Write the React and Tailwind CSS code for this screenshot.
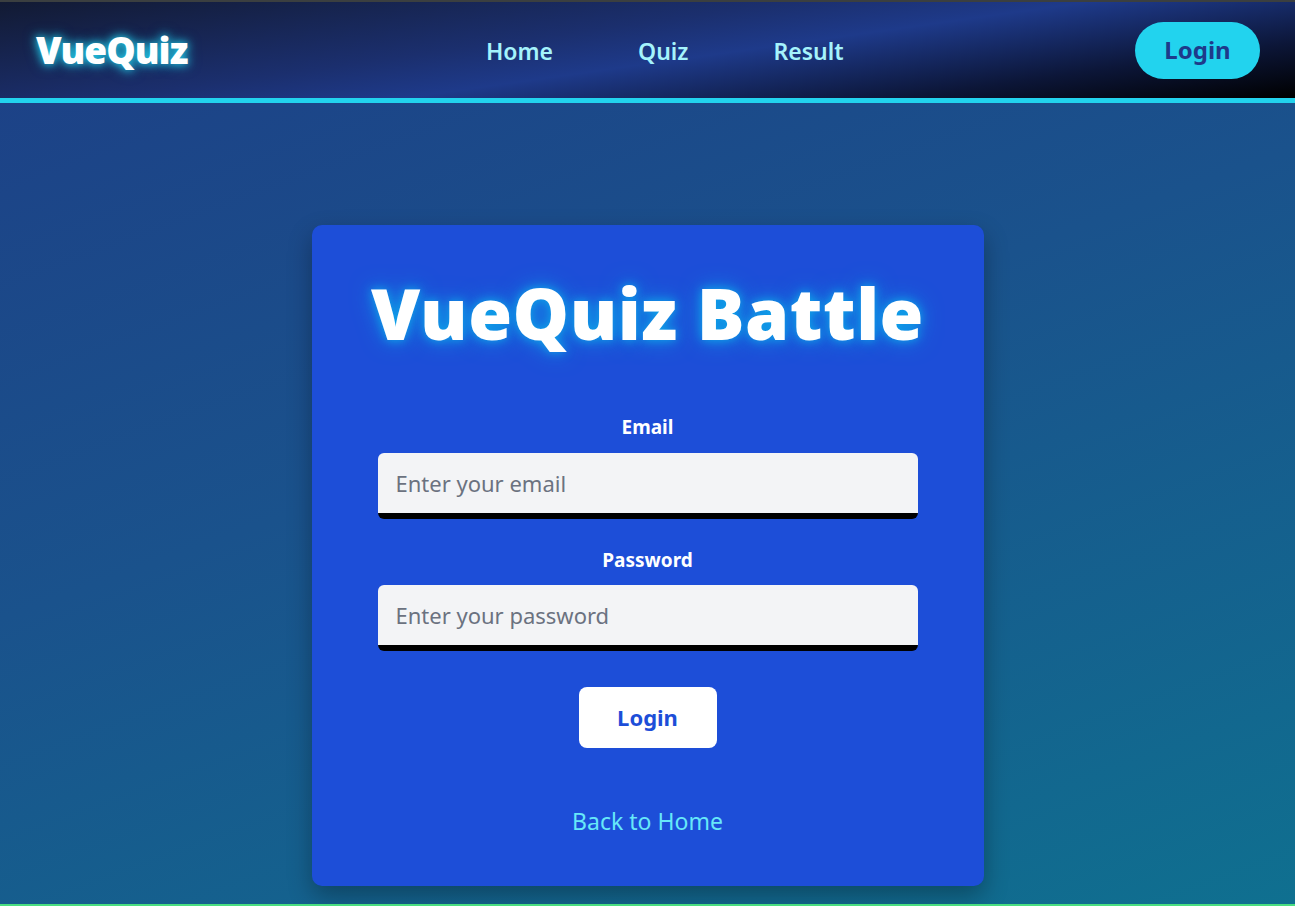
import React from 'react';

function Navbar() {
  return (
    <header className="bg-[#3b3f40] pt-[2px]">
      <nav className="h-[101px] flex items-center justify-between pl-[36px] pr-[35px] border-b-[5px] border-[#22d3ee] bg-[linear-gradient(172deg,#121a33_0%,#1b2f6e_40%,#1e3a8a_55%,#0c1638_80%,#000000_100%)]">
        <a className="text-[37px] font-black text-white tracking-tight [text-shadow:0_0_8px_#22d3ee,0_0_14px_rgba(34,211,238,0.6)]">VueQuiz</a>
        <ul className="flex items-center gap-[85px] ml-[7px] pt-[3px] text-[23px] font-semibold text-[#a5f3fc]">
          <li>Home</li>
          <li>Quiz</li>
          <li>Result</li>
        </ul>
        <button className="w-[125px] h-[57px] rounded-full bg-[#22d3ee] text-[#1e3a8a] text-[24px] font-bold">
          Login
        </button>
      </nav>
    </header>
  );
}

function Field({ label, type, placeholder }) {
  return (
    <div className="flex flex-col items-center w-full">
      <label className="text-[19px] font-bold text-white mb-[11px]">{label}</label>
      <input
        type={type}
        placeholder={placeholder}
        className="w-full h-[66px] px-[18px] bg-[#f3f4f6] rounded-md border-b-[6px] border-black text-[22px] text-gray-700 placeholder:text-[#6b7280] outline-none"
      />
    </div>
  );
}

export default function App() {
  return (
    <div className="min-h-[906px] flex flex-col font-['Noto_Sans','Open_Sans',sans-serif] bg-[linear-gradient(160deg,#1d3f86_0%,#1a528c_45%,#0f7090_100%)]">
      <Navbar />
      <main className="flex-1 flex justify-center pt-[122px]">
        <div className="w-[672px] h-[661px] bg-[#1d4ed8] rounded-[10px] shadow-[0_10px_25px_rgba(0,0,0,0.3)] flex flex-col items-center pt-[44px]">
          <h1 className="text-[71px] leading-[88px] font-black text-white tracking-[0.5px] [text-shadow:0_0_10px_#0ea5e9,0_0_22px_rgba(14,165,233,0.8)]">
            VueQuiz Battle
          </h1>
          <form className="w-[540px] flex flex-col items-center mt-[56px] gap-[27px]">
            <Field label="Email" type="email" placeholder="Enter your email" />
            <Field label="Password" type="password" placeholder="Enter your password" />
            <button type="button" className="mt-[9px] w-[138px] h-[61px] bg-white rounded-lg text-[#1d4ed8] text-[22px] font-bold">
              Login
            </button>
          </form>
          <a className="mt-[56px] text-[23px] text-[#67e8f9]">Back to Home</a>
        </div>
      </main>
      <div className="h-[2px] bg-[#4ade80]" />
    </div>
  );
}
